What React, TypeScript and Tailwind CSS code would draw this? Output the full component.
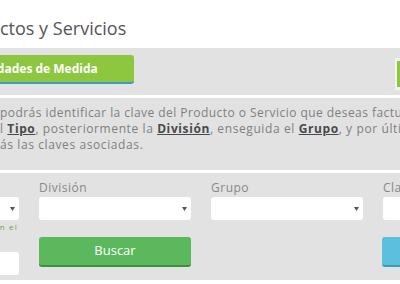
import React from "react";

const Arrow = () => (
  <svg width="5" height="4" viewBox="0 0 5 4" className="shrink-0">
    <path d="M0 0 L5 0 L2.5 4 Z" fill="#555" />
  </svg>
);

const Select = () => (
  <div className="h-[23px] w-full bg-white rounded-[3px] flex items-center justify-end pr-[4px]">
    <Arrow />
  </div>
);

export default function App() {
  return (
    <div
      className="w-[400px] h-[284px] overflow-hidden bg-white relative"
      style={{ fontFamily: '"Open Sans", sans-serif' }}
    >
      {/* Title */}
      <div className="h-[48px] pt-[16px] leading-[24px] text-[18px] text-[#555] whitespace-nowrap">
        ctos y Servicios
      </div>

      {/* Band 1 */}
      <div className="h-[47px] w-[400px] bg-[#e2e2e2] flex items-start">
        <div className="ml-[-60px] mt-[7px] w-[194px] h-[29px] shrink-0 bg-[#8dc63f] rounded-[3px] border-b-2 border-[#3d9ccc] flex items-center justify-center text-white font-bold text-[12px] whitespace-nowrap">
          Unidades de Medida
        </div>
        <div className="flex-1" />
        <div className="mt-[10px] w-[5px] h-[32px] shrink-0 bg-[#f2f2f2] pl-[2px] pt-[3px]">
          <div className="w-[3px] h-[26px] bg-[#8dc63f]" />
        </div>
      </div>

      <div className="h-[3px]" />

      {/* Band 2 */}
      <div className="h-[72px] bg-[#e2e2e2] pt-[7px] text-[12px] leading-[16px] tracking-[0.6px] text-[#808080] whitespace-nowrap">
        <div className="tracking-[0.45px]">podrás identificar la clave del Producto o Servicio que deseas facturar</div>
        <div>
          l <span className="font-bold text-[#4a4a4a] underline">Tipo</span>, posteriormente la{" "}
          <span className="font-bold text-[#4a4a4a] underline">División</span>, enseguida el{" "}
          <span className="font-bold text-[#4a4a4a] underline">Grupo</span>, y por último verás
        </div>
        <div>ás las claves asociadas.</div>
      </div>

      <div className="h-[3px]" />

      {/* Band 3 */}
      <div className="h-[107px] bg-[#e2e2e2] flex gap-[20px] ml-[-133px]">
        {/* Column 1 */}
        <div className="w-[152px] shrink-0 flex flex-col pt-[6px]">
          <div className="h-[18px] text-[12px] leading-[18px] tracking-[0.5px] text-[#888]">Tipo</div>
          <Select />
          <div className="mt-[2px] flex justify-end text-[8px] tracking-[1.2px] text-[#6a9e5a] whitespace-nowrap leading-[10px]">
            <span className="pr-[1px]">Selecciona el tipo y luego busca en el</span>
          </div>
          <div className="mt-[20px] h-[23px] w-full bg-white rounded-[3px]" />
        </div>
        {/* Column 2 */}
        <div className="w-[152px] shrink-0 flex flex-col pt-[6px]">
          <div className="h-[18px] text-[12px] leading-[18px] tracking-[0.5px] text-[#888]">División</div>
          <Select />
          <div className="mt-[17px] h-[30px] w-full bg-[#5cb85c] rounded-[3px] border-b-2 border-[#3e8f3e] flex items-center justify-center text-white text-[13px]">
            Buscar
          </div>
        </div>
        {/* Column 3 */}
        <div className="w-[152px] shrink-0 flex flex-col pt-[6px]">
          <div className="h-[18px] text-[12px] leading-[18px] tracking-[0.5px] text-[#888]">Grupo</div>
          <Select />
        </div>
        {/* Column 4 */}
        <div className="w-[152px] shrink-0 flex flex-col pt-[6px]">
          <div className="h-[18px] text-[12px] leading-[18px] tracking-[0.5px] text-[#888]">Clave</div>
          <Select />
          <div className="mt-[17px] ml-[-1px] h-[30px] w-full bg-[#5bc0de] rounded-[3px] border-b-2 border-[#3a9dbb]" />
        </div>
      </div>
    </div>
  );
}
